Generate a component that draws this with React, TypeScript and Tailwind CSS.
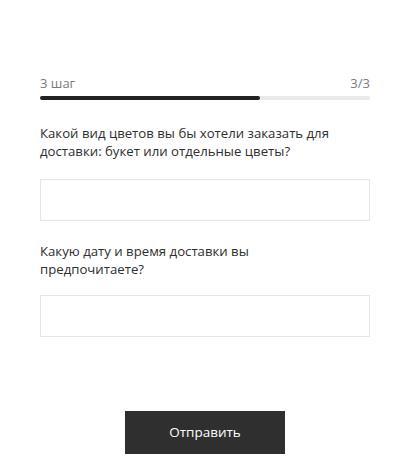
const questions = [
  "Какой вид цветов вы бы хотели заказать для доставки: букет или отдельные цветы?",
  "Какую дату и время доставки вы предпочитаете?",
];

const App = () => {
  return (
    <div
      className="min-h-[466px] w-[410px] bg-white px-10 pt-[75px]"
      style={{ fontFamily: '"Open Sans", "Noto Sans", sans-serif' }}
    >
      <div className="flex justify-between text-[13px] leading-[16px] text-[#7a7a7a]">
        <span>3 шаг</span>
        <span>3/3</span>
      </div>
      <div className="mt-[5px] h-[4px] w-full rounded-full bg-[#e9e9e9]">
        <div className="h-full w-2/3 rounded-full bg-[#222222]" />
      </div>

      <form onSubmit={(e) => e.preventDefault()}>
        <p className="mt-[24px] text-[13.2px] leading-[18px] text-[#2e2e2e]">{questions[0]}</p>
        <input
          type="text"
          className="mt-[19px] block h-[42px] w-full border border-[#e6e6e6] px-3 text-[14px] outline-none"
        />
        <p className="mt-[21px] pr-[90px] text-[13.2px] leading-[18px] text-[#2e2e2e]">{questions[1]}</p>
        <input
          type="text"
          className="mt-[17px] block h-[42px] w-full border border-[#e6e6e6] px-3 text-[14px] outline-none"
        />
        <button
          type="submit"
          className="mx-auto mt-[74px] block h-[43px] w-[160px] bg-[#2f2f2f] text-[13.5px] text-white"
        >
          Отправить
        </button>
      </form>
    </div>
  );
};

export default App;
